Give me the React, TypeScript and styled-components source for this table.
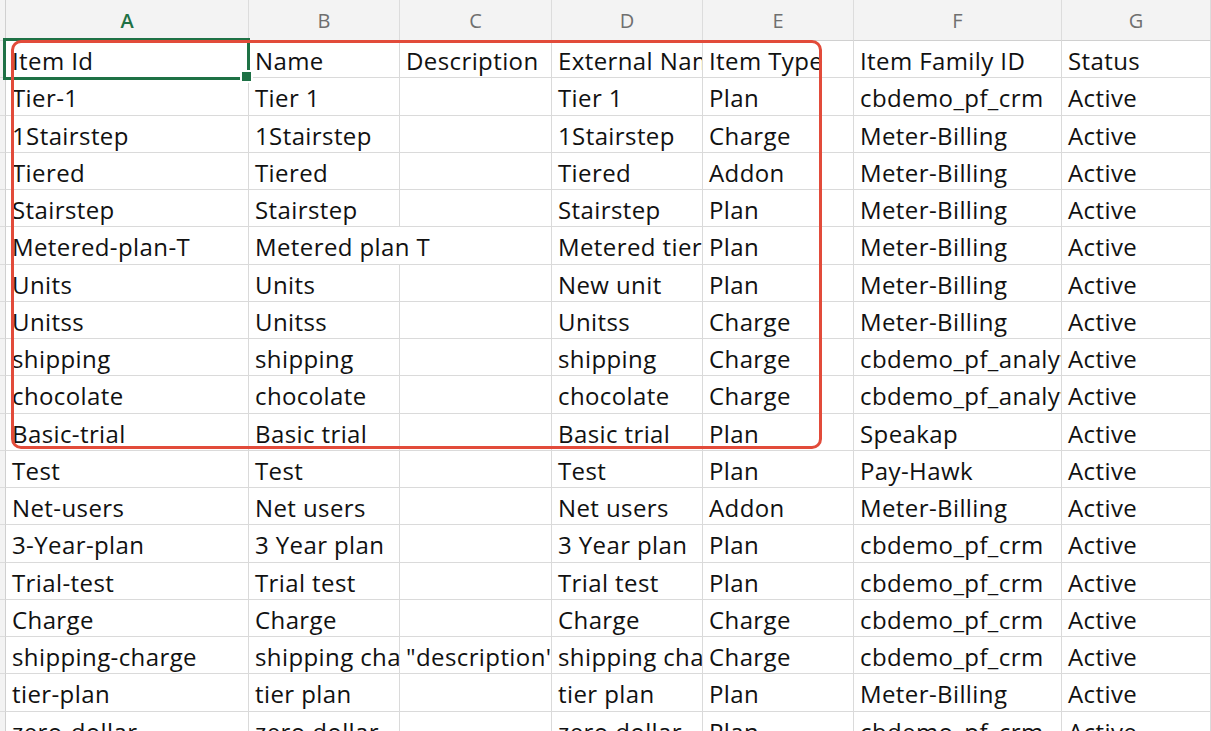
import React from "react";
import styled, { createGlobalStyle } from "styled-components";

const GlobalStyle = createGlobalStyle`
  html, body { margin: 0; padding: 0; background: #ffffff; }
  body { width: 1211px; height: 731px; overflow: hidden; }
`;

const Sheet = styled.div`
  position: relative;
  width: 1211px;
  height: 731px;
  overflow: hidden;
  background: #ffffff;
`;

const Grid = styled.div`
  display: grid;
  grid-template-columns: 6px 243px 151px 152px 151px 151px 208px 1fr;
  grid-template-rows: 41px;
  grid-auto-rows: 37.25px;
`;

const ColHeader = styled.div<{ $active?: boolean }>`
  box-sizing: border-box;
  background: #f3f3f3;
  border-right: 1px solid #dcdcdc;
  border-bottom: 1px solid #d0d0d0;
  display: flex;
  align-items: center;
  justify-content: center;
  font-family: "Open Sans", "Liberation Sans", sans-serif;
  font-size: 20px;
  color: ${(p) => (p.$active ? "#1e7145" : "#6f6f6f")};
  font-weight: ${(p) => (p.$active ? 600 : 400)};
`;

const RowHeader = styled.div`
  box-sizing: border-box;
  background: #f3f3f3;
  border-right: 1px solid #d0d0d0;
  border-bottom: 1px solid #dcdcdc;
`;

const Cell = styled.div<{ $span?: number }>`
  box-sizing: border-box;
  grid-column: span ${(p) => p.$span ?? 1};
  border-right: 1px solid #dadada;
  border-bottom: 1px solid #dadada;
  padding: 3px 4px 0 6px;
  display: flex;
  align-items: center;
  overflow: hidden;
  white-space: nowrap;
  font-family: "Open Sans", Lato, sans-serif;
  font-size: 24px;
  letter-spacing: 0.4px;
  color: #111111;
`;

const Selection = styled.div`
  position: absolute;
  left: 3px;
  top: 38px;
  width: 247px;
  height: 42px;
  box-sizing: border-box;
  border: 3px solid #1e7145;
  pointer-events: none;
`;

const FillHandle = styled.div`
  position: absolute;
  left: 241px;
  top: 71px;
  width: 11px;
  height: 11px;
  box-sizing: border-box;
  background: #1e7145;
  border: 1px solid #ffffff;
  outline: 2px solid #ffffff;
  outline-offset: -1px;
`;

const Highlight = styled.div`
  position: absolute;
  left: 11px;
  top: 40px;
  width: 811px;
  height: 409px;
  box-sizing: border-box;
  border: 3px solid #e24b3a;
  border-radius: 10px;
  pointer-events: none;
`;

const columns = ["A", "B", "C", "D", "E", "F", "G"];

const rows: string[][] = [
  ["Item Id", "Name", "Description", "External Name", "Item Type", "Item Family ID", "Status"],
  ["Tier-1", "Tier 1", "", "Tier 1", "Plan", "cbdemo_pf_crm", "Active"],
  ["1Stairstep", "1Stairstep", "", "1Stairstep", "Charge", "Meter-Billing", "Active"],
  ["Tiered", "Tiered", "", "Tiered", "Addon", "Meter-Billing", "Active"],
  ["Stairstep", "Stairstep", "", "Stairstep", "Plan", "Meter-Billing", "Active"],
  ["Metered-plan-T", "Metered plan T", "", "Metered tier plan", "Plan", "Meter-Billing", "Active"],
  ["Units", "Units", "", "New unit", "Plan", "Meter-Billing", "Active"],
  ["Unitss", "Unitss", "", "Unitss", "Charge", "Meter-Billing", "Active"],
  ["shipping", "shipping", "", "shipping", "Charge", "cbdemo_pf_analytics", "Active"],
  ["chocolate", "chocolate", "", "chocolate", "Charge", "cbdemo_pf_analytics", "Active"],
  ["Basic-trial", "Basic trial", "", "Basic trial", "Plan", "Speakap", "Active"],
  ["Test", "Test", "", "Test", "Plan", "Pay-Hawk", "Active"],
  ["Net-users", "Net users", "", "Net users", "Addon", "Meter-Billing", "Active"],
  ["3-Year-plan", "3 Year plan", "", "3 Year plan", "Plan", "cbdemo_pf_crm", "Active"],
  ["Trial-test", "Trial test", "", "Trial test", "Plan", "cbdemo_pf_crm", "Active"],
  ["Charge", "Charge", "", "Charge", "Charge", "cbdemo_pf_crm", "Active"],
  ["shipping-charge", "shipping charge", "\"description\"", "shipping charge", "Charge", "cbdemo_pf_crm", "Active"],
  ["tier-plan", "tier plan", "", "tier plan", "Plan", "Meter-Billing", "Active"],
  ["zero-dollar", "zero dollar", "", "zero dollar", "Plan", "cbdemo_pf_crm", "Active"],
];

function renderRow(values: string[], r: number) {
  const cells: React.ReactNode[] = [<RowHeader key={`rh-${r}`} />];
  for (let c = 0; c < values.length; c++) {
    const text = values[c];
    // a long Name spills over an empty Description cell, as in the sheet
    if (c === 1 && values[2] === "" && text.length > 12) {
      cells.push(
        <Cell key={`${r}-${c}`} $span={2}>
          {text}
        </Cell>
      );
      c++;
      continue;
    }
    cells.push(<Cell key={`${r}-${c}`}>{text}</Cell>);
  }
  return cells;
}

export default function App() {
  return (
    <>
      <GlobalStyle />
      <Sheet>
        <Grid>
          <RowHeader />
          {columns.map((col) => (
            <ColHeader key={col} $active={col === "A"}>
              {col}
            </ColHeader>
          ))}
          {rows.map((row, i) => renderRow(row, i))}
        </Grid>
        <Selection />
        <FillHandle />
        <Highlight />
      </Sheet>
    </>
  );
}
